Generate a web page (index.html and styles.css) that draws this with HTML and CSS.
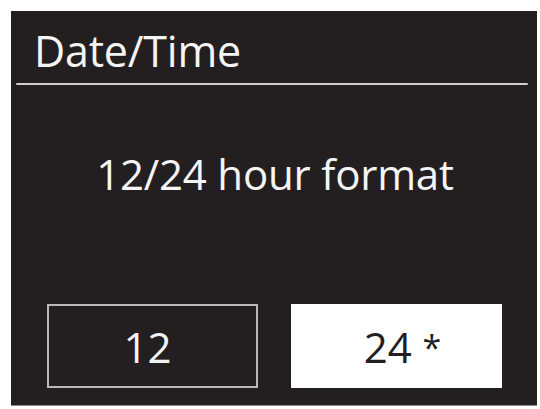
FILE: index.html
```html
<!DOCTYPE html>
<html>
<head>
<meta charset="utf-8">
<link rel="stylesheet" href="styles.css">
</head>
<body>
<div class="screen">
  <div class="title">Date/Time</div>
  <div class="divider"></div>
  <div class="prompt">12/24 hour format</div>
  <div class="options">
    <div class="opt first"><span>12</span></div>
    <div class="opt selected"><span>24 <span class="star">*</span></span></div>
  </div>
</div>
</body>
</html>
```
FILE: styles.css
```css
html, body {
  margin: 0;
  padding: 0;
  background: #ffffff;
}
body {
  width: 540px;
  height: 409px;
  overflow: hidden;
  font-family: "Open Sans", "Noto Sans", sans-serif;
}
.screen {
  box-sizing: border-box;
  margin: 11px 0 0 11px;
  width: 526px;
  height: 395px;
  background: #231f20;
  color: #f4f4f4;
  display: flex;
  flex-direction: column;
  border-bottom: 1px solid #8a8a8a;
}
.title {
  font-size: 43px;
  line-height: 1;
  padding: 18px 0 0 23px;
  height: 48px;
  box-sizing: border-box;
  letter-spacing: -0.2px;
}
.divider {
  height: 2px;
  background: #cfcfcf;
  margin: 24px 9px 0 5px;
  border-radius: 1px;
}
.prompt {
  text-align: center;
  font-size: 42px;
  line-height: 1;
  margin-top: 68px;
  letter-spacing: -0.2px;
  padding-left: 2px;
}
.options {
  margin-top: auto;
  margin-bottom: 17px;
  padding: 0 35px 0 36px;
  display: grid;
  grid-template-columns: 1fr 1fr;
  column-gap: 33px;
}
.opt {
  box-sizing: border-box;
  height: 84px;
  border: 2px solid #b9b9b9;
  display: flex;
  align-items: center;
  justify-content: center;
  font-size: 42px;
  color: #f4f4f4;
}
.opt.first {
  padding-right: 10px;
}
.opt.selected {
  background: #ffffff;
  border-color: #ffffff;
  color: #231f20;
  padding-left: 12px;
}
.star {
  font-size: 34px;
  vertical-align: 3px;
}
```
